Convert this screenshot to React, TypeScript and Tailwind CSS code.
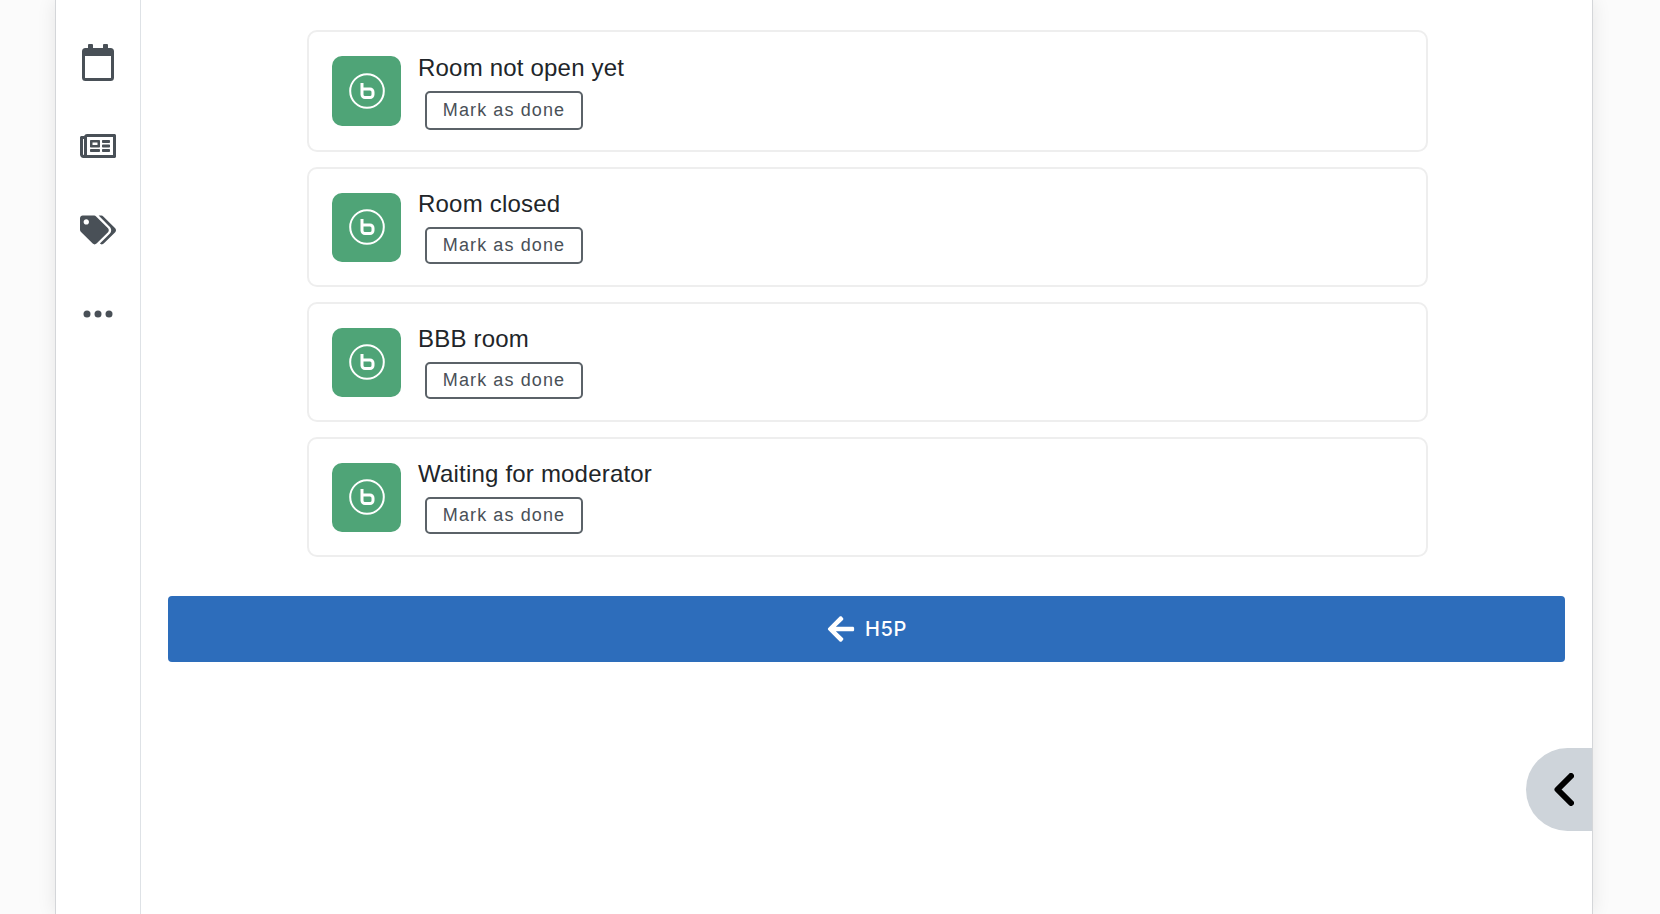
import { FaRegNewspaper, FaTags, FaArrowLeft } from "react-icons/fa";

const ROOMS = [
  { title: "Room not open yet", tall: true },
  { title: "Room closed", tall: false },
  { title: "BBB room", tall: false },
  { title: "Waiting for moderator", tall: false },
];

function BbbIcon({ tall }: { tall: boolean }) {
  return (
    <div className={`flex w-[69px] shrink-0 items-center justify-center rounded-[10px] bg-[#4fa477] ${tall ? "h-[70px]" : "h-[69px]"}`}>
      <svg width="38" height="38" viewBox="0 0 38 38" fill="none" stroke="#fff">
        <circle cx="19" cy="19" r="16.8" strokeWidth="2" />
        <path d="M14 11v11.5a3 3 0 0 0 3 3h5a3 3 0 0 0 3-3v-2.5a3 3 0 0 0-3-3h-7" strokeWidth="3" />
      </svg>
    </div>
  );
}

function RoomCard({ title, tall }: { title: string; tall: boolean }) {
  return (
    <li className={`flex items-center rounded-[10px] border-2 border-[#eeeeee] bg-white pl-[23px] ${tall ? "h-[122px]" : "h-[120px]"}`}>
      <BbbIcon tall={tall} />
      <div className={`ml-[17px] flex flex-col ${tall ? "" : "pb-[2px]"}`}>
        <h3 className="text-[24px] leading-[30px] font-normal tracking-[0.2px] text-[#212529]">{title}</h3>
        <button className={`ml-[7px] mt-[8px] w-[158px] rounded-[5px] border-2 border-[#5b6268] text-[18px] tracking-[1.1px] text-[#495057] ${tall ? "h-[39px]" : "h-[37px]"}`}>
          Mark as done
        </button>
      </div>
    </li>
  );
}

export default function App() {
  return (
    <div className="relative h-[914px] overflow-hidden bg-[#fbfbfb] font-['Liberation_Sans',Arial,sans-serif]">
      <div className="ml-[55px] mr-[67px] flex h-full border-x border-[#d4d6d9] bg-white shadow-[0_0_18px_rgba(0,0,0,0.09)]">
        {/* Sidebar */}
        <aside className="flex w-[85px] shrink-0 flex-col items-center border-r border-[#dee2e6] pt-[44px] text-[#495057]">
          <svg width="34" height="37" viewBox="0 0 34 37" fill="none">
            <rect x="2.5" y="5.5" width="29" height="30" rx="2" stroke="#495057" strokeWidth="3" />
            <rect x="2" y="5" width="30" height="7" fill="#495057" />
            <rect x="7" y="0" width="5" height="8" rx="1" fill="#495057" />
            <rect x="22" y="0" width="5" height="8" rx="1" fill="#495057" />
          </svg>
          <FaRegNewspaper className="mt-[47px] text-[36px]" />
          <FaTags className="mt-[48px] text-[36px]" />
          <svg className="mt-[62px]" width="32" height="8" viewBox="0 0 32 8" fill="#495057">
            <circle cx="5" cy="4" r="3.5" />
            <circle cx="16" cy="4" r="3.5" />
            <circle cx="27" cy="4" r="3.5" />
          </svg>
        </aside>

        {/* Main content */}
        <main className="flex-1 px-[27px] pt-[30px]">
          <ul className="ml-[139px] mr-[137px] flex flex-col gap-[15px]">
            {ROOMS.map((room) => (
              <RoomCard key={room.title} title={room.title} tall={room.tall} />
            ))}
          </ul>
          <button className="mt-[39px] flex h-[66px] w-full items-center justify-center gap-[9px] rounded-[4px] bg-[#2d6dbb] font-['Inter',sans-serif] text-[20px] font-medium tracking-[0.6px] text-white">
            <FaArrowLeft className="text-[30px]" />
            H5P
          </button>
        </main>
      </div>

      {/* Collapse tab */}
      <button className="absolute right-[68px] top-[748px] flex h-[83px] w-[66px] items-center rounded-l-[42px] bg-[#ced4da] pl-[28px]">
        <svg width="20" height="33" viewBox="0 0 20 33" fill="none" stroke="#000" strokeWidth="6" strokeLinecap="round" strokeLinejoin="round">
          <polyline points="17,3 3.5,16.5 17,30" />
        </svg>
      </button>
    </div>
  );
}
